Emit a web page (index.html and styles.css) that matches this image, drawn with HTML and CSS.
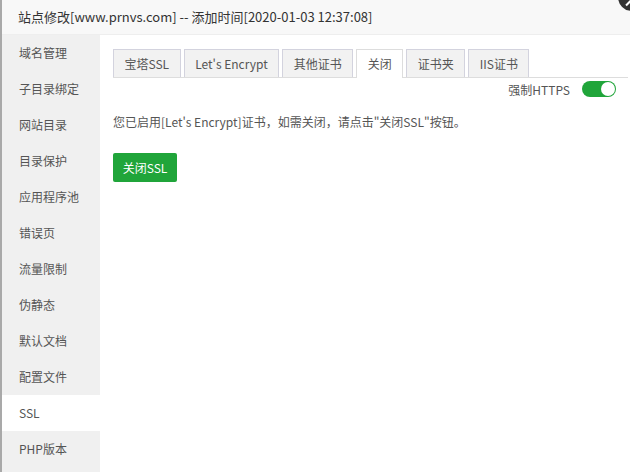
FILE: index.html
```html
<!DOCTYPE html>
<html lang="zh-CN">
<head>
<meta charset="utf-8">
<title>站点修改</title>
<link rel="stylesheet" href="styles.css">
</head>
<body>
<div class="dialog">
  <div class="title-bar">站点修改[www.prnvs.com] -- 添加时间[2020-01-03 12:37:08]</div>
  <span class="close-btn"><span class="close-mark"></span></span>
  <div class="main">
    <ul class="side">
      <li>域名管理</li>
      <li>子目录绑定</li>
      <li>网站目录</li>
      <li>目录保护</li>
      <li>应用程序池</li>
      <li>错误页</li>
      <li>流量限制</li>
      <li>伪静态</li>
      <li>默认文档</li>
      <li>配置文件</li>
      <li class="active">SSL</li>
      <li>PHP版本</li>
    </ul>
    <div class="content">
      <ul class="tabs">
        <li>宝塔SSL</li>
        <li>Let's Encrypt</li>
        <li>其他证书</li>
        <li class="on">关闭</li>
        <li>证书夹</li>
        <li>IIS证书</li>
      </ul>
      <div class="force-row">
        <span class="force-label">强制HTTPS</span>
        <span class="switch"><span class="knob"></span></span>
      </div>
      <p class="notice">您已启用[Let's Encrypt]证书，如需关闭，请点击"关闭SSL"按钮。</p>
      <button class="btn-green">关闭SSL</button>
    </div>
  </div>
</div>
</body>
</html>
```
FILE: styles.css
```css
html, body {
  margin: 0;
  padding: 0;
  width: 630px;
  height: 472px;
  overflow: hidden;
  background: #fff;
}
body {
  font-family: "Noto Sans CJK SC", "Liberation Sans", sans-serif;
  color: #555;
}
.dialog {
  position: relative;
  width: 628px;
  height: 472px;
  border-left: 2px solid #a9a9a9;
  display: flex;
  flex-direction: column;
  overflow: hidden;
}
.title-bar {
  height: 34px;
  line-height: 34px;
  padding-left: 16px;
  font-size: 13px;
  color: #333;
  background: #f8f8f8;
  border-bottom: 1px solid #eee;
  flex: none;
}
.close-btn {
  position: absolute;
  left: 616px;
  top: -17px;
  width: 28px;
  height: 28px;
  border-radius: 50%;
  background: #333;
}
.close-mark {
  position: absolute;
  left: 7px;
  top: 19px;
  width: 7px;
  height: 2px;
  background: #fff;
  transform: rotate(-45deg);
}
.main {
  flex: 1;
  display: flex;
  min-height: 0;
}
.side {
  list-style: none;
  margin: 0;
  padding: 0;
  width: 98px;
  background: #f0f0f0;
  flex: none;
}
.side li {
  height: 36px;
  line-height: 36px;
  padding-left: 17px;
  font-size: 12px;
  color: #555;
}
.side li.active {
  background: #fff;
}
.content {
  flex: 1;
  padding: 14px 2px 0 13px;
}
.tabs {
  list-style: none;
  margin: 0;
  padding: 0;
  display: flex;
  gap: 3px;
  height: 28px;
  border-bottom: 1px solid #ddd;
}
.tabs li {
  height: 27px;
  line-height: 27px;
  padding: 0 10.5px;
  font-size: 12px;
  color: #555;
  background: #f2f2f2;
  border: 1px solid #d3d3de;
  border-bottom: none;
}
.tabs li.on {
  background: #fff;
  height: 28px;
  border-color: #ddd;
}
.force-row {
  display: flex;
  justify-content: flex-end;
  align-items: center;
  height: 20px;
  margin-top: 1px;
  padding-right: 12px;
}
.force-label {
  font-size: 12px;
  color: #555;
  margin-right: 12px;
}
.switch {
  width: 34px;
  height: 16px;
  border-radius: 9px;
  background: #20a53a;
  position: relative;
}
.knob {
  position: absolute;
  right: 1px;
  top: 1px;
  width: 14px;
  height: 14px;
  border-radius: 50%;
  background: #fff;
}
.notice {
  margin: 13px 0 0 0;
  font-size: 12px;
  line-height: 20px;
  color: #555;
}
.btn-green {
  margin-top: 21px;
  width: 64px;
  height: 29px;
  border: none;
  border-radius: 2px;
  background: #20a53a;
  color: #fff;
  font-family: "Noto Sans CJK SC", "Liberation Sans", sans-serif;
  font-size: 12px;
  padding: 0;
}
```
